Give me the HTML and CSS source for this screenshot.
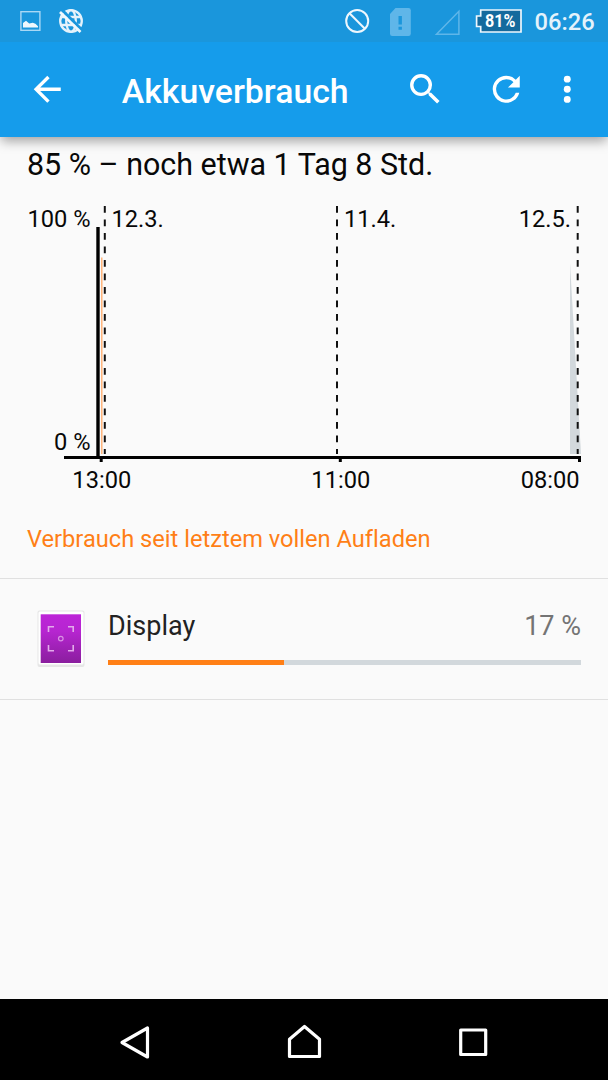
FILE: index.html
```html
<!DOCTYPE html>
<html lang="de">
<head>
<meta charset="utf-8">
<title>Akkuverbrauch</title>
<link rel="stylesheet" href="styles.css">
</head>
<body>
<div class="screen">
  <div class="status">
    <svg class="status-left" width="90" height="42" viewBox="0 0 90 42">
      <rect x="20.9" y="11.7" width="19" height="18.6" fill="none" stroke="#a9d8f5" stroke-width="1.4"/>
      <path d="M23 27.500V23l3-2.200 3.200 2.600 3.600-.6 2.600 1 2.600 2.400v1.300z" fill="#eef7fd"/>
      <g fill="none" stroke="#e4f2fb" stroke-width="2.300">
        <circle cx="71" cy="21" r="10.800"/>
        <ellipse cx="71" cy="21" rx="4.800" ry="10.800"/>
        <path d="M62 17h18M62 25h18"/>
      </g>
      <path d="M62.500 10.500l20 20" stroke="#1a96dc" stroke-width="3"/>
      <path d="M60 12l20.500 20" stroke="#f0f8fd" stroke-width="2.600"/>
    </svg>
    <div class="status-right">
      <svg width="196" height="42" viewBox="330 0 196 42">
        <g fill="none" stroke="#eef7fd" stroke-width="2"><circle cx="357.200" cy="21" r="11"/><path d="M349.500 13.300l15.400 15.400"/></g>
        <path d="M395.500 8h13q2.300 0 2.300 2.300v23.400q0 2.300-2.300 2.300h-16.200q-2.300 0-2.300-2.300V14z" fill="#5fb6e9"/>
        <path d="M398.500 16h3.400v8.500h-3.400zM398.500 26.700h3.400v3h-3.400z" fill="#1a96dc"/>
        <path d="M458.900 11.300v22.900h-22.400z" fill="none" stroke="#5fb6e9" stroke-width="1.500"/>
        <path d="M480.700 10h40.300v22h-40.300v-5.500h-4.100V16h4.100z" fill="#156a9d" stroke="#eef7fd" stroke-width="1.700"/>
        <text x="500.300" y="27.400" text-anchor="middle" class="battery" textLength="30.500" lengthAdjust="spacingAndGlyphs">81%</text>
      </svg>
      <span class="clock">06:26</span>
    </div>
  </div>
  <header class="toolbar">
    <svg class="icon" viewBox="0 0 24 24"><path d="M20 11H7.830l5.590-5.590L12 4l-8 8 8 8 1.410-1.410L7.830 13H20z"/></svg>
    <h1 class="title">Akkuverbrauch</h1>
    <div class="actions">
      <svg class="icon" viewBox="0 0 24 24"><path d="M15.500 14h-.79l-.28-.27A6.470 6.470 0 0 0 16 9.500 6.500 6.500 0 1 0 9.500 16c1.610 0 3.090-.59 4.230-1.570l.27.28v.79l5 4.990L20.490 19zm-6 0a4.500 4.500 0 1 1 0-9 4.500 4.500 0 0 1 0 9z"/></svg>
      <svg class="icon" viewBox="0 0 24 24"><path d="M17.650 6.350A7.960 7.960 0 0 0 12 4a8 8 0 1 0 7.730 10h-2.080A6 6 0 1 1 12 6c1.660 0 3.140.69 4.220 1.780L13 11h7V4z"/></svg>
      <svg class="icon" viewBox="0 0 24 24"><circle cx="12" cy="6" r="2.050"/><circle cx="12" cy="12" r="2.050"/><circle cx="12" cy="18" r="2.050"/></svg>
    </div>
  </header>
  <main class="content">
    <p class="summary">85 % – noch etwa 1 Tag 8 Std.</p>
    <svg class="chart" width="608" height="304" viewBox="0 196 608 304">
      <path d="M570 263l11 191h-11z" fill="#d2d8dc"/>
      <path d="M101.800 257.500V454" stroke="#ffa967" stroke-width="1.300"/>
      <g stroke="#111" stroke-width="2" stroke-dasharray="6.700 6.800">
        <path d="M104.800 206V454"/><path d="M337 206V454"/><path d="M577.700 206V454"/>
      </g>
      <path d="M96.300 227h3.400v229h-3.400zM64 456h517v3H64zM99.700 459h3v3h-3zM338.800 459h3v3h-3zM578 459h3v3h-3z" fill="#000"/>
      <g class="labels">
        <text x="90.500" y="227" text-anchor="end">100 %</text>
        <text x="111.500" y="227">12.3.</text>
        <text x="344" y="227">11.4.</text>
        <text x="571" y="227" text-anchor="end">12.5.</text>
        <text x="90.500" y="450.400" text-anchor="end">0 %</text>
        <text x="101.800" y="488.400" text-anchor="middle">13:00</text>
        <text x="340.800" y="488.400" text-anchor="middle">11:00</text>
        <text x="579.500" y="488.400" text-anchor="end">08:00</text>
      </g>
    </svg>
    <h2 class="section">Verbrauch seit letztem vollen Aufladen</h2>
    <div class="row">
      <svg class="app-icon" width="48" height="58" viewBox="37 610 48 58">
        <defs><linearGradient id="purple" x1="0" y1="0" x2="0" y2="1"><stop offset="0" stop-color="#bd25d8"/><stop offset=".35" stop-color="#b625d0"/><stop offset="1" stop-color="#8a1e9e"/></linearGradient></defs>
        <rect x="37.500" y="610.500" width="47" height="56.500" rx="2" fill="#e6e6e6"/>
        <rect x="38.500" y="611.500" width="45" height="53" rx="1.500" fill="#fff"/>
        <rect x="40.700" y="614.300" width="40.300" height="48.700" fill="url(#purple)"/>
        <path d="M48.500 632v-5.200H54M68 626.800h5.200v5.200M48.500 645v5.800H54M68 650.800h5.200V645" fill="none" stroke="#e2acea" stroke-width="1.600"/>
        <circle cx="60.800" cy="638.600" r="2.300" fill="none" stroke="#d990e5" stroke-width="1.200"/>
      </svg>
      <div class="usage">
        <div class="usage-head"><span class="name">Display</span><span class="percent">17 %</span></div>
        <div class="bar"><div class="fill" style="width:37.200%"></div></div>
      </div>
    </div>
  </main>
  <nav class="nav">
    <svg width="32" height="36" viewBox="119 1024 32 36"><path d="M122 1042.500l25.500-14.500v29z"/></svg>
    <svg width="36" height="36" viewBox="286 1024 36 36"><path d="M289.500 1056.500v-17.300l15-12.700 15 12.700v17.300z"/></svg>
    <svg width="32" height="36" viewBox="457 1024 32 36"><path d="M460.700 1030h25v24.500h-25z"/></svg>
  </nav>
</div>
</body>
</html>
```
FILE: styles.css
```css
* { box-sizing: border-box; margin: 0; padding: 0; }
body { font-family: Roboto, "Noto Sans", sans-serif; background: #fafafa; font-variant-ligatures: none; }
svg { display: block; flex: none; }
.screen { width: 608px; height: 1080px; display: flex; flex-direction: column; background: #fafafa; overflow: hidden; }
.status { height: 42px; background: #1a96dc; display: flex; justify-content: space-between; flex: none; z-index: 2; }
.status-right { display: flex; width: 278px; }
.battery { font-size: 18px; font-weight: 700; fill: #fff; }
.clock { font-size: 23.700px; font-weight: 500; line-height: 44px; margin-left: 8.500px; color: #e4f2fb; white-space: nowrap; }
.toolbar { height: 94.500px; flex: none; background: #159ceb; display: flex; align-items: center; padding: 0 20.500px 0 26.800px; box-shadow: 0 5px 11px -1px rgba(0,0,0,.36); z-index: 1; }
.icon { width: 40.530px; height: 40.530px; fill: #fff; }
.title { margin-left: 54.500px; color: #fff; font-size: 33.800px; font-weight: 500; line-height: 40px; padding-top: 5px; }
.actions { display: flex; margin-left: auto; }
.actions .icon:nth-child(2) { margin-left: 40.700px; }
.actions .icon:nth-child(3) { margin-left: 20.200px; }
.content { flex: 1; }
.summary { font-size: 30.450px; line-height: 36px; height: 59.500px; padding: 10px 27px 0; color: #080808; white-space: nowrap; }
.labels { font-size: 23.650px; fill: #080808; }
.section { font-size: 23.650px; line-height: 28px; height: 78px; padding: 25px 27px 0; font-weight: 400; color: #ff7f16; white-space: nowrap; }
.row { height: 122px; border-top: 1px solid #e0e0e0; border-bottom: 1px solid #e0e0e0; display: flex; padding: 31px 27px 0 37px; }
.usage { flex: 1; margin-left: 23px; }
.usage-head { display: flex; justify-content: space-between; font-size: 27px; line-height: 32px; color: #222; }
.percent { color: #747474; }
.bar { height: 5px; margin-top: 18px; background: #d2d8dc; }
.fill { height: 100%; background: #ff7f16; }
.nav { height: 81px; flex: none; background: #000; display: flex; justify-content: space-between; padding: 25px 119px 0; }
.nav path { fill: none; stroke: #fff; stroke-width: 3.200; stroke-linejoin: round; }
```
